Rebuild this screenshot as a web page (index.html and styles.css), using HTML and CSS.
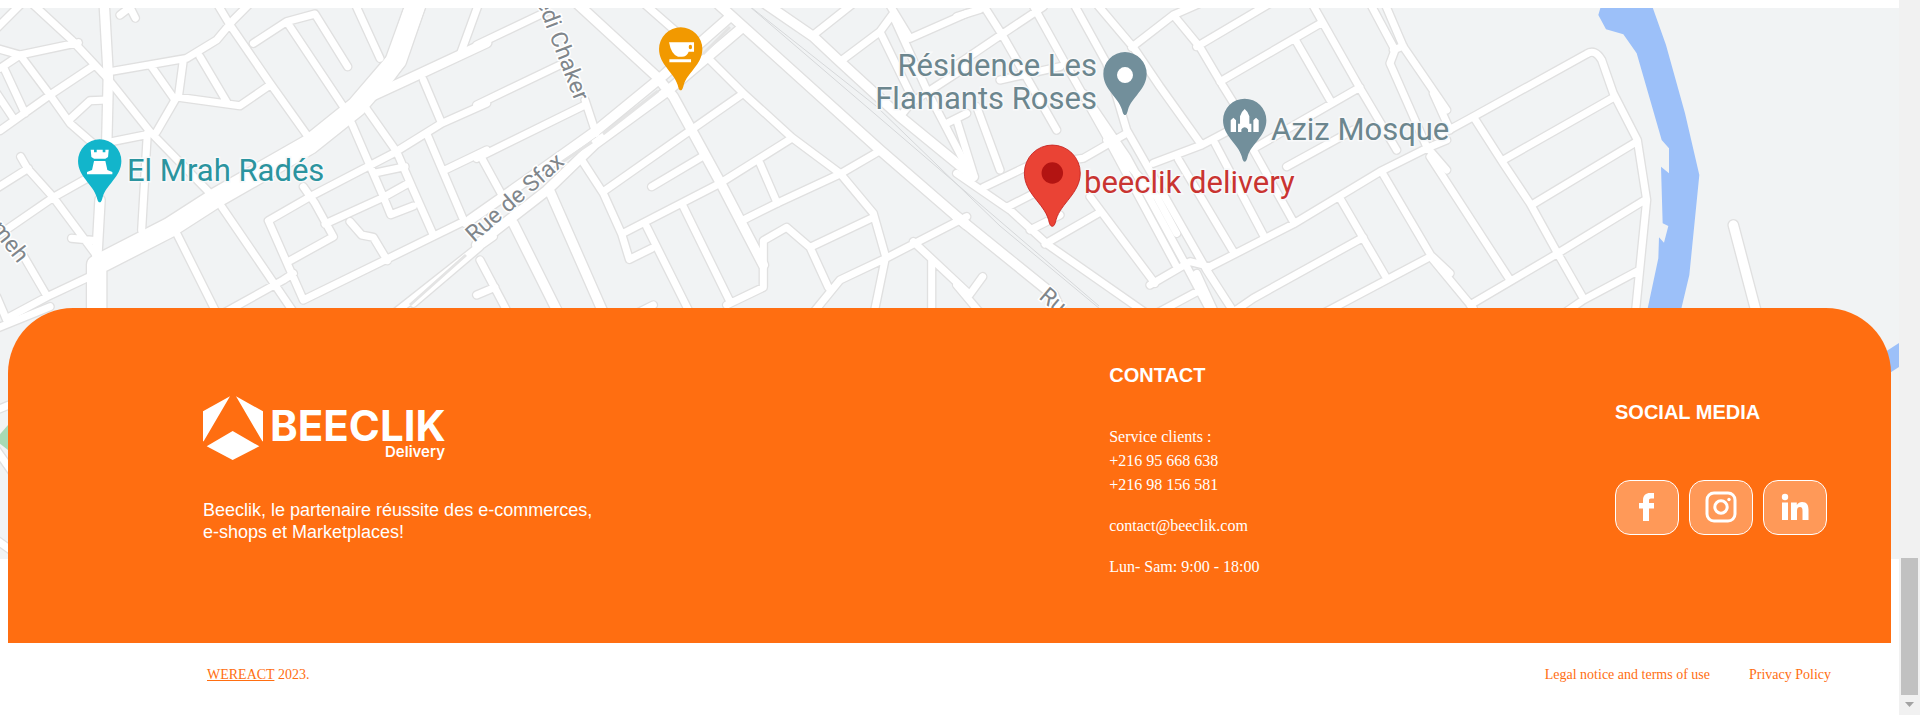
FILE: index.html
```html
<!DOCTYPE html>
<html lang="fr">
<head>
<meta charset="utf-8">
<meta name="viewport" content="width=device-width, initial-scale=1">
<title>Beeclik Delivery</title>
<link rel="stylesheet" href="styles.css">
</head>
<body>
<div class="page">
<div class="content">
<main>
<svg class="map" viewBox="0 8 1899 551" preserveAspectRatio="xMidYMin slice" role="img" aria-label="Beeclik Delivery, Radés">
<defs>
<g id="roads">
  <g transform="scale(.33333)">
    <path class="road w60" d="M1252 0L1190 180L1070 320L930 432L650 592L510 682L290 795V960"/>
    <path class="road w60" d="M1252 0L1185 185L1130 260"/>
    <path class="road w26" d="M312 0L325 230L320 440M300 600L290 780M1090 300L1220 240L1460 128"/>
    <path class="road" d="M85 0L215 120L320 232L450 395L640 590M0 392L150 285L285 195M-10 145L60 165L235 128M-10 85L75 0M0 205L60 165L150 285L210 370L290 440M10 200L75 340M-10 280L42 358M205 362L270 302L320 300M330 215L560 175L650 120L700 60L750 10M645 0L690 75L810 250L935 425M455 200L525 300L470 395M550 180L535 292L720 317L810 255M600 170L680 305M760 130L860 65L945 42L1043 200M860 65L1040 335M1060 0L1140 175M360 45L390 22L406 54M335 425L450 402M442 400L425 690M1380 165L1440 0M1270 240L1325 370L1460 310M1095 320L1190 455L1240 570L1300 705M1055 370L1150 590L1172 644L1240 618M1325 370L1180 460L930 590L805 662L910 900L1390 665M1280 400L1395 670M1335 510L1460 450M1120 520L1215 500M975 672L1150 592L1225 550M910 560L945 610L1000 710L870 782M1050 665L1085 705L1120 712L1162 782M665 620L890 950M525 690L655 950M670 940L850 840L880 820M0 702L160 592L270 530M62 470L82 505L160 592L285 760M-10 565L85 505M72 770L142 890M30 950L142 890L280 825M215 715L290 722"/>
    <path class="road" d="M1170 950L1430 745L1480 710M1240 910L1440 740"/>
    <path class="road" d="M-10 985L150 920M20 960L-10 890M-10 1230L40 1210M-10 1350L60 1450M-10 1620L60 1670"/>
  </g>
  <g transform="translate(480 0) scale(.33333)">
    <path class="road w26" d="M-10 735L200 572L345 432L560 275L790 80M-30 660L240 470L345 395L540 235L745 55M280 0L530 230L580 290L725 555L850 795M690 -10L790 80L1200 450L1460 675M840 0L1000 110L1080 185L1260 350L1480 530M210 575L375 950M100 670L240 950"/>
    <path class="road" d="M-10 135L200 35M-10 315L250 190M-10 475L315 315M315 300L348 400M0 465L85 620M480 0L600 105M680 170L790 280L935 412L1080 520L1180 640L1217 770L1180 950M1000 105L1120 10M1080 185L1200 95L1240 40M1220 0L1290 115L1460 40M1200 95L1300 300L1260 350M1240 50L1345 280L1460 500M790 280L640 385L370 575M515 560L670 468M425 702L720 550L935 415M305 480L370 580L425 702L448 778L515 745M0 780L90 950M-10 885L45 862M500 680L635 950M610 620L750 905M790 660L890 610L1080 522L1200 452M840 490L892 610M850 800L850 862L740 915M850 800L850 722L920 682L990 742L1180 652M990 742L1045 862M990 950L1080 840L1217 775L1460 650M1300 725L1460 875M1355 780L1355 950M470 940L520 915M1290 310L1460 200M1400 370L1460 340"/>
  </g>
  <g transform="translate(960 0) scale(.33333)">
    <path class="road" d="M-10 50L60 28M60 0L130 110L290 390M-10 195L130 100L250 20M210 0L310 180L440 410L650 800M335 0L440 190L500 390L740 810L830 950M370 280L500 470L680 800L760 950M400 0L520 142L600 260L725 435M515 142L640 45L720 10M640 45L720 142L790 260L840 340M710 140L930 10M780 245L1085 68M1050 0L1200 265L1310 450M1005 118L1110 300M580 490L725 435L810 390M890 440L1200 262M980 500L1180 390M655 478L820 755M765 430L910 705M880 450L1000 665M750 800L1000 672L1260 515L1400 445L1460 420M1140 595L1280 835M800 950L880 895L1210 712M1265 515L1415 770M1090 940L1415 768L1470 820M1225 0L1305 150L1290 190L1400 440L1460 510M1270 0L1330 140L1460 330M1300 150L1330 138M70 562L200 500L370 475L500 400M140 622L320 530M210 690L300 645M255 732L415 640M-10 360L40 520M50 320L120 510M120 240L300 200M390 590L585 850M570 855L690 785L750 800M590 940L730 865M710 820L770 950M28 885L68 830M-10 855L70 950M440 420L590 590L650 700M-10 520L150 630L265 735L580 955"/>
    <path class="road w26" d="M-10 650L280 885L310 950"/>
  </g>
  <g transform="translate(1440 0) scale(.33333)">
    <path class="road" d="M-20 280L30 390M-10 410L100 350L440 162Q465 145 485 180L520 280L592 420L620 600L585 950M100 350L190 490L270 610L350 755L430 895M190 480L525 290M275 615L590 425M90 915L350 762L615 600M365 945L430 900L595 812M-30 470L210 840M-20 780L100 925"/>
    <path class="road w26" d="M880 675L955 960"/>
  </g>
</g>
<path id="pin" d="M0 124C-5 124-7 116-9 108C-20 70-65 47-65 0A65 65 0 0 1 65 0C65 47 20 70 9 108C7 116 5 124 0 124Z"/>
</defs>
<rect class="land" x="-400" y="0" width="2700" height="600"/>
<path class="park" d="M-5 440L8 425L16 422V456L8 450Z"/>
<g class="water">
  <path transform="translate(1440 0) scale(.33333)" d="M488 0L475 45L498 88L550 103L590 160L665 420L687 445V520L663 500L668 670L685 678L672 728L657 712L655 775L622 930H723L748 825L778 525L735 340L678 135L630 0Z"/>
  <path d="M1885 352L1899 343V367L1885 376Z"/>
</g>
<g class="rail">
  <path d="M742 0L1099 306M752 8L876 106L1000 226L1106 314"/>
</g>
<use href="#roads" class="casing"/>
<use href="#roads" class="surface"/>
<path class="median" d="M603 134L658 91M703 54L730 27M562 162L592 142M410 305L466 255"/>
<g class="street">
  <text transform="translate(474 243) rotate(-41)">Rue de Sfax</text>
  <text transform="translate(575 102) rotate(69)" text-anchor="end">edi Chaker</text>
  <text transform="translate(18 264) rotate(52)" text-anchor="end">ameh</text>
  <text transform="translate(1038 298) rotate(40)">Ru</text>
</g>
<g class="place">
  <text class="teal" x="127" y="181">El Mrah Radés</text>
  <text class="slate" x="1097" y="76" text-anchor="end">Résidence Les</text>
  <text class="slate" x="1097" y="109" text-anchor="end">Flamants Roses</text>
  <text class="slate" x="1271" y="140">Aziz Mosque</text>
  <text class="red" x="1084" y="193">beeclik delivery</text>
</g>
<g transform="translate(99.7 161) scale(.33333)">
  <use href="#pin" fill="#12b5cb"/>
  <path fill="#fff" d="M-27-34H-17V-26H-9V-34H9V-26H17V-34H27L25-12L17-7H-17L-25-12ZM-17 0H17L23 27L38 33V40H-38V33L-23 27Z"/>
</g>
<g transform="translate(680.7 49) scale(.33333)">
  <use href="#pin" fill="#f29900"/>
  <path fill="#fff" d="M-35-20H40V8H24Q18 23 4 23H-8Q-28 18-35-20ZM-34 31H31V40H-34Z"/>
  <ellipse cx="29" cy="-6" rx="5" ry="7" fill="#f29900"/>
</g>
<g transform="translate(1125 73.7) scale(.33333)">
  <use href="#pin" fill="#728f9b"/>
  <circle cy="4" r="24" fill="#fff"/>
</g>
<g transform="translate(1244.7 120.3) scale(.33333)">
  <use href="#pin" fill="#728f9b"/>
  <path fill="#fff" d="M-42 35V0L-34-8L-26 0V35ZM26 35V0L34-8L42 0V35ZM-20 35V10H-14V-12Q-12-24 0-34Q12-24 14-12V10H20V35H10V27Q0 15-10 27V35Z"/>
</g>
<g transform="translate(1052.3 173) scale(.43)">
  <use href="#pin" fill="#ea4335" stroke="#c5221f" stroke-width="2"/>
  <circle r="25" fill="#b31412"/>
</g>
</svg>
</main>
<footer>
<div class="card">
  <section class="brand">
    <svg class="logo" viewBox="0 0 242 64" role="img" aria-label="Beeclik Delivery">
      <g transform="scale(.33333) translate(-69 -80)">
        <path d="M150 81L69 126V216H71ZM168 81L249 126V216H247ZM158 185L238 231L158 272L80 231Z"/>
      </g>
      <text class="logo-name" x="67" y="45">BEECLIK</text>
      <text class="logo-sub" x="242" y="61" text-anchor="end">Delivery</text>
    </svg>
    <p class="tagline">Beeclik, le partenaire réussite des e-commerces,<br>e-shops et Marketplaces!</p>
  </section>
  <section class="contact">
    <h2>CONTACT</h2>
    <p>Service clients :<br>+216 95 668 638<br>+216 98 156 581</p>
    <p>contact@beeclik.com</p>
    <p>Lun- Sam: 9:00 - 18:00</p>
  </section>
  <section class="social">
    <h2>SOCIAL MEDIA</h2>
    <div class="social-links">
      <a href="#" aria-label="Facebook"><svg viewBox="0 0 32 32"><path d="M12 30V17.500H8V12H12V9.500C12 4 15 2 19 2H23V7.500H20C18.500 7.500 18 8.200 18 9.500V12H23V17.500H18V30Z"/></svg></a>
      <a href="#" aria-label="Instagram"><svg viewBox="0 0 32 32"><rect class="line" x="2" y="2" width="28" height="28" rx="7"/><circle class="line" cx="16" cy="16" r="6.200"/><circle cx="24" cy="8.500" r="1.700"/></svg></a>
      <a href="#" aria-label="LinkedIn"><svg viewBox="0 0 32 32"><circle cx="6" cy="6" r="3.200"/><path d="M3 11.500H9V29H3ZM12 11.500H17.800V14C19 12 21 11 23 11C28 11 29.500 14 29.500 19V29H23.500V20C23.500 17.500 23 16 21 16C18.700 16 18 17.700 18 20V29H12Z"/></svg></a>
    </div>
  </section>
</div>
<div class="legal">
  <p><a class="underlined" href="#">WEREACT</a> 2023.</p>
  <nav><a href="#">Legal notice and terms of use</a><a href="#">Privacy Policy</a></nav>
</div>
</footer>
</div>
<div class="scrollbar" aria-hidden="true"><div class="thumb"></div><svg viewBox="0 0 21 20"><path d="M6 7H15L10.500 12Z"/></svg></div>
</div>
</body>
</html>
```

FILE: styles.css
```css
* { box-sizing: border-box; }
body { margin: 0; background: #fff; font-family: "Liberation Serif", "Times New Roman", serif; }
h2, p { margin: 0; }
a { color: inherit; text-decoration: none; }

.page { display: grid; grid-template-columns: minmax(0, 1fr) 21px; min-height: 100vh; }
.content { padding-top: 8px; }

/* Map */
.map { display: block; width: 100%; height: 551px; font-family: Roboto, sans-serif; }
.land { fill: #f1f3f4; }
.park { fill: #a8dab5; }
.water { fill: #9cc0f9; }
.rail { fill: none; stroke: #d6d8da; stroke-width: 1; }
.casing { --edge: 8px; stroke: #e0e0e0; }
.surface { --edge: 0px; stroke: #fff; }
.road { fill: none; stroke-width: calc(21px + var(--edge)); stroke-linecap: round; stroke-linejoin: round; }
.w26 { stroke-width: calc(28px + var(--edge)); }
.w60 { stroke-width: calc(58px + var(--edge)); }
.median { fill: none; stroke: #e4e4e4; stroke-width: 3; }
.place { font-size: 31px; stroke: #f8f9fa; stroke-width: 3; paint-order: stroke; font-weight: 400; }
.street { font-size: 23px; font-weight: 400; fill: #80868b; stroke: #fff; stroke-width: 3; paint-order: stroke; }
.teal { fill: #2b949f; }
.slate { fill: #6c868e; }
.red { fill: #c93431; }

/* Footer card */
footer { position: relative; margin-top: -251px; }
.card {
  display: grid;
  grid-template-columns: 43fr 24fr 212px;
  align-items: center;
  margin: 0 8px;
  padding: 55px 64px 64px 195px;
  border-radius: 65px 65px 0 0;
  background: #ff6e11;
  color: #fff;
}
h2 { font: bold 20px/24px "Liberation Sans", Arial, sans-serif; }
.brand { display: grid; gap: 39px; padding-bottom: 3px; }
.logo { display: block; width: 242px; height: 64px; fill: #fff; overflow: visible; font-family: Inter, sans-serif; }
.logo-name { font-size: 42px; font-weight: 700; }
.logo-sub { font-size: 15px; font-weight: 600; }
.tagline { font: 18px/22px "Liberation Sans", Arial, sans-serif; }
.contact { display: grid; gap: 17px; font-size: 16px; line-height: 24px; }
.contact h2 { margin-bottom: 21px; }
.social { display: grid; gap: 56px; padding-bottom: 8px; }
.social-links { display: flex; gap: 10px; }
.social-links a {
  display: grid;
  place-items: center;
  width: 64px;
  height: 55px;
  border: 1px solid #fff;
  border-radius: 15px;
  background: rgba(255, 255, 255, .3);
}
.social-links svg { width: 32px; height: 32px; fill: #fff; }
.social-links .line { fill: none; stroke: #fff; stroke-width: 3; }

/* Legal row */
.legal {
  display: flex;
  justify-content: space-between;
  padding: 24px 68px 32px 207px;
  color: #ff6e11;
  font-size: 14px;
  line-height: 16px;
}
.legal nav { display: flex; gap: 39px; }
.underlined { text-decoration: underline; }

/* Scrollbar */
.scrollbar { display: flex; flex-direction: column; justify-content: flex-end; background: #f1f1f1; }
.thumb { height: 137px; margin: 0 2px; background: #c1c1c1; }
.scrollbar svg { display: block; width: 21px; height: 20px; fill: #a3a3a3; }
```
